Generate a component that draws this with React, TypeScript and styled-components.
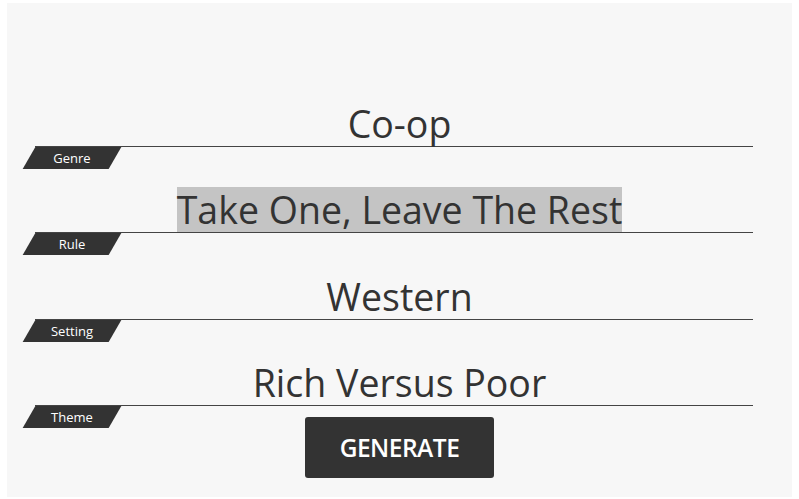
import styled, { createGlobalStyle } from 'styled-components';

const GlobalStyle = createGlobalStyle`
	html, body {
		margin: 0;
		padding: 0;
		background: #ffffff;
	}
	body {
		font-family: 'Open Sans', Lato, sans-serif;
	}
`;

const Panel = styled.main`
	margin: 3px 7px 2px;
	height: 494px;
	box-sizing: border-box;
	padding-top: 98px;
	background-color: #f7f7f7;
	display: flex;
	flex-direction: column;
	align-items: stretch;
`;

const Row = styled.section`
	position: relative;
	margin-bottom: 40.33px;
	text-align: center;
`;

const Value = styled.span<{ $selected?: boolean }>`
	display: inline-block;
	height: 45px;
	line-height: 45px;
	font-size: 37.5px;
	color: #333333;
	background-color: ${(props) => (props.$selected ? '#c4c4c4' : 'transparent')};
	white-space: nowrap;
`;

const Rule = styled.div`
	height: 1px;
	margin: 0 39px 0 28px;
	background-color: #444444;
`;

const Tag = styled.span`
	position: absolute;
	left: 22px;
	top: 46px;
	width: 86px;
	height: 22px;
	display: flex;
	align-items: center;
	justify-content: center;
	color: #ffffff;
	font-size: 13px;

	&::before {
		content: '';
		position: absolute;
		inset: 0;
		background-color: #333333;
		transform: skewX(-30deg);
		z-index: 0;
	}

	span {
		position: relative;
	}
`;

const Footer = styled.div`
	margin-top: -29.33px;
	display: flex;
	justify-content: center;
`;

const Button = styled.button`
	width: 189px;
	height: 61px;
	border: none;
	border-radius: 3px;
	background-color: #333333;
	color: #ffffff;
	font-family: 'Open Sans', sans-serif;
	font-size: 24.5px;
	font-weight: 600;
	letter-spacing: -0.5px;
	cursor: pointer;
`;

const prompts = [
	{ label: 'Genre', value: 'Co-op' },
	{ label: 'Rule', value: 'Take One, Leave The Rest', selected: true },
	{ label: 'Setting', value: 'Western' },
	{ label: 'Theme', value: 'Rich Versus Poor' },
];

export default function App() {
	return (
		<>
			<GlobalStyle />
			<Panel>
				{prompts.map((p) => (
					<Row key={p.label}>
						<Value $selected={p.selected}>{p.value}</Value>
						<Rule />
						<Tag>
							<span>{p.label}</span>
						</Tag>
					</Row>
				))}
				<Footer>
					<Button type='button'>GENERATE</Button>
				</Footer>
			</Panel>
		</>
	);
}
